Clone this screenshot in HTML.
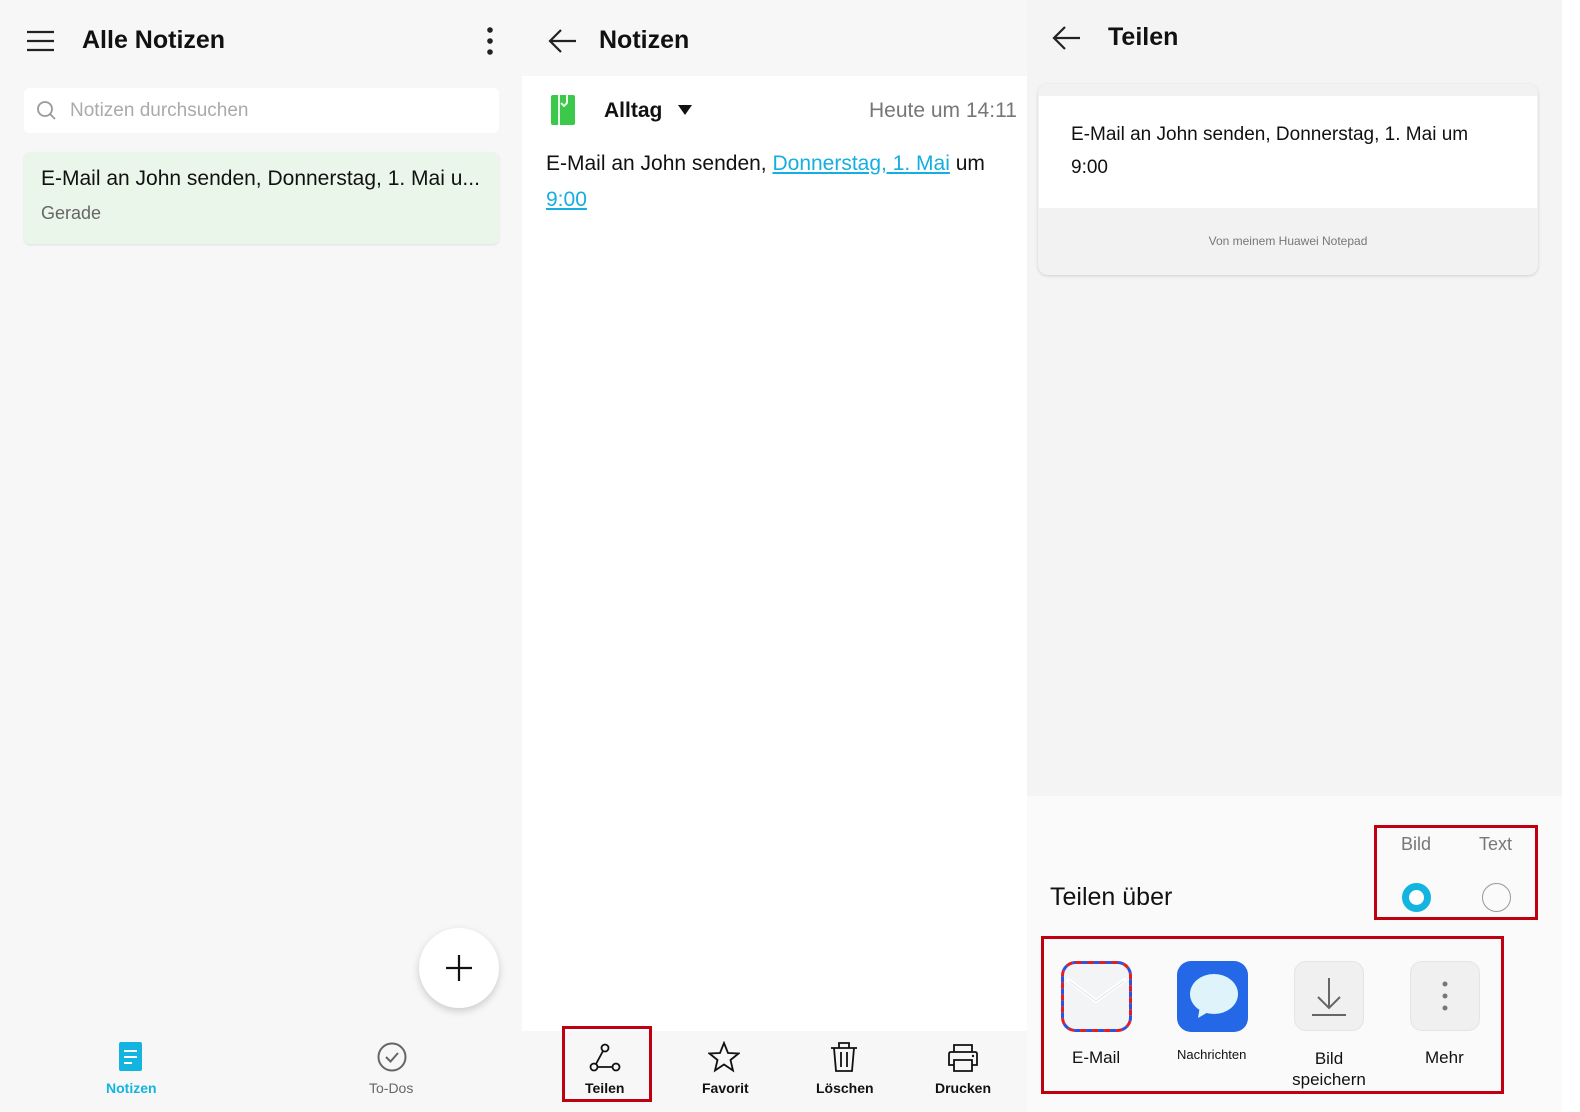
<!DOCTYPE html>
<html><head><meta charset="utf-8"><style>
*{margin:0;padding:0;box-sizing:border-box}
body{width:1580px;height:1112px;position:relative;background:#fff;font-family:"Liberation Sans",Roboto,sans-serif;overflow:hidden;color:#111}
.a{position:absolute}
.red{position:absolute;border:3px solid #c00010}
</style></head><body>
<!-- LEFT -->
<div class="a" style="left:0;top:0;width:522px;height:1112px;background:#f7f7f7"></div>
<svg class="a" style="left:26px;top:30px" width="30" height="22"><path d="M1 2H28M1 11H28M1 20H28" stroke="#222" stroke-width="2.2"/></svg>
<div class="a" style="left:82px;top:26px;font-size:25px;font-weight:bold;color:#111">Alle Notizen</div>
<svg class="a" style="left:484px;top:26px" width="12" height="32"><circle cx="6" cy="4" r="2.8" fill="#222"/><circle cx="6" cy="15" r="2.8" fill="#222"/><circle cx="6" cy="26" r="2.8" fill="#222"/></svg>
<div class="a" style="left:24px;top:88px;width:475px;height:45px;background:#fff;border-radius:6px"></div>
<svg class="a" style="left:36px;top:100px" width="22" height="22"><circle cx="9" cy="9" r="7" stroke="#999" stroke-width="1.8" fill="none"/><path d="M14 14L19 19" stroke="#999" stroke-width="1.8"/></svg>
<div class="a" style="left:70px;top:100px;font-size:19px;color:#aaa">Notizen durchsuchen</div>
<div class="a" style="left:24px;top:152px;width:475px;height:92px;background:#eaf6ea;border-radius:6px;box-shadow:0 1px 2px rgba(0,0,0,.1)"></div>
<div class="a" style="left:41px;top:167px;font-size:21px;color:#111">E-Mail an John senden, Donnerstag, 1. Mai u...</div>
<div class="a" style="left:41px;top:203px;font-size:18px;color:#666">Gerade</div>
<div class="a" style="left:419px;top:928px;width:80px;height:80px;border-radius:50%;background:#fff;box-shadow:0 3px 8px rgba(0,0,0,.18)"></div>
<svg class="a" style="left:444px;top:953px" width="30" height="30"><path d="M15 2V28M2 15H28" stroke="#111" stroke-width="2.2"/></svg>
<svg class="a" style="left:119px;top:1042px" width="24" height="30"><rect x="0" y="0" width="23" height="29" rx="2" fill="#14b4e0"/><path d="M5 9H18M5 15H18M5 21H13" stroke="#fff" stroke-width="2"/></svg>
<div class="a" style="left:106px;top:1080px;font-size:14px;font-weight:bold;color:#14b4e0">Notizen</div>
<svg class="a" style="left:377px;top:1042px" width="30" height="30"><circle cx="15" cy="15" r="13.5" stroke="#666" stroke-width="2" fill="none"/><path d="M9 15L13.5 19.5L21 11" stroke="#666" stroke-width="2" fill="none"/></svg>
<div class="a" style="left:369px;top:1080px;font-size:14px;color:#666">To-Dos</div>

<!-- MIDDLE -->
<div class="a" style="left:522px;top:0;width:505px;height:76px;background:#f7f7f7"></div>
<div class="a" style="left:522px;top:76px;width:505px;height:955px;background:#fff"></div>
<div class="a" style="left:522px;top:1031px;width:505px;height:81px;background:#f7f7f7"></div>
<svg class="a" style="left:548px;top:28px" width="30" height="26"><path d="M28 13H3M13 2L2 13L13 24" stroke="#222" stroke-width="2.2" fill="none"/></svg>
<div class="a" style="left:599px;top:26px;font-size:25px;font-weight:bold">Notizen</div>
<svg class="a" style="left:551px;top:95px" width="26" height="31"><rect x="0" y="0" width="24" height="30" rx="2" fill="#3cc84a"/><path d="M8 0V30M16 0V8L13 11L10 8" stroke="#eaf8ea" stroke-width="2" fill="none"/></svg>
<div class="a" style="left:604px;top:99px;font-size:21px;font-weight:bold">Alltag</div>
<svg class="a" style="left:677px;top:104px" width="16" height="12"><path d="M1 1H15L8 11Z" fill="#111"/></svg>
<div class="a" style="left:869px;top:99px;font-size:21px;color:#777">Heute um 14:11</div>
<div class="a" style="left:546px;top:146px;font-size:21px;line-height:36px;width:470px">E-Mail an John senden, <span style="color:#14aee0;text-decoration:underline">Donnerstag, 1. Mai</span> um<br><span style="color:#14aee0;text-decoration:underline">9:00</span></div>
<div class="red" style="left:562px;top:1026px;width:90px;height:76px"></div>
<svg class="a" style="left:589px;top:1043px" width="34" height="30"><circle cx="16" cy="5" r="3.5" stroke="#111" stroke-width="1.8" fill="none"/><circle cx="5" cy="24" r="3.5" stroke="#111" stroke-width="1.8" fill="none"/><circle cx="27" cy="24" r="3.5" stroke="#111" stroke-width="1.8" fill="none"/><path d="M14 8L7 21M8.5 24H23.5" stroke="#111" stroke-width="1.8"/></svg>
<div class="a" style="left:585px;top:1080px;font-size:14px;font-weight:bold">Teilen</div>
<svg class="a" style="left:708px;top:1041px" width="32" height="32"><path d="M16 2L20 12L30.5 12.5L22.5 19L25 29.5L16 23.5L7 29.5L9.5 19L1.5 12.5L12 12Z" stroke="#111" stroke-width="1.8" fill="none"/></svg>
<div class="a" style="left:702px;top:1080px;font-size:14px;font-weight:bold">Favorit</div>
<svg class="a" style="left:829px;top:1041px" width="30" height="32"><path d="M2 7H28M10 7V2H20V7M5 7L7 30H23L25 7M12 11V26M18 11V26" stroke="#111" stroke-width="1.8" fill="none"/></svg>
<div class="a" style="left:816px;top:1080px;font-size:14px;font-weight:bold">Löschen</div>
<svg class="a" style="left:946px;top:1043px" width="34" height="30"><path d="M8 9V2H26V9M8 22H3V11Q3 9 5 9H29Q31 9 31 11V22H26M8 17H26V28H8Z" stroke="#111" stroke-width="1.8" fill="none"/><circle cx="27" cy="13" r="1.2" fill="#111"/></svg>
<div class="a" style="left:935px;top:1080px;font-size:14px;font-weight:bold">Drucken</div>

<!-- RIGHT -->
<div class="a" style="left:1027px;top:0;width:535px;height:796px;background:#f4f4f4"></div>
<div class="a" style="left:1027px;top:796px;width:535px;height:316px;background:#fafafa"></div>
<svg class="a" style="left:1052px;top:25px" width="30" height="26"><path d="M28 13H3M13 2L2 13L13 24" stroke="#222" stroke-width="2.2" fill="none"/></svg>
<div class="a" style="left:1108px;top:23px;font-size:25px;font-weight:bold">Teilen</div>
<div class="a" style="left:1038px;top:84px;width:500px;height:191px;background:#f2f2f2;border-radius:10px;box-shadow:0 1px 3px rgba(0,0,0,.15)"></div>
<div class="a" style="left:1039px;top:96px;width:498px;height:112px;background:#fff"></div>
<div class="a" style="left:1071px;top:118px;font-size:19px;line-height:33px">E-Mail an John senden, Donnerstag, 1. Mai um<br>9:00</div>
<div class="a" style="left:1038px;top:234px;width:500px;text-align:center;font-size:12px;color:#777">Von meinem Huawei Notepad</div>
<div class="a" style="left:1050px;top:883px;font-size:25px;color:#111">Teilen über</div>
<div class="red" style="left:1374px;top:825px;width:164px;height:95px"></div>
<div class="a" style="left:1401px;top:834px;font-size:18px;color:#777">Bild</div>
<div class="a" style="left:1479px;top:834px;font-size:18px;color:#777">Text</div>
<div class="a" style="left:1402px;top:883px;width:29px;height:29px;border-radius:50%;border:7px solid #14b4e0;background:#fff"></div>
<div class="a" style="left:1482px;top:883px;width:29px;height:29px;border-radius:50%;border:1.5px solid #999"></div>
<div class="red" style="left:1041px;top:936px;width:463px;height:158px"></div>
<svg class="a" style="left:1061px;top:961px" width="71" height="71"><rect x="1.5" y="1.5" width="68" height="68" rx="13" fill="#f3f4f6"/><rect x="1.5" y="1.5" width="68" height="68" rx="13" fill="none" stroke="#e02020" stroke-width="3" stroke-dasharray="6 6"/><rect x="1.5" y="1.5" width="68" height="68" rx="13" fill="none" stroke="#3050e0" stroke-width="3" stroke-dasharray="6 6" stroke-dashoffset="6"/><path d="M6 18L35 40L65 18" stroke="#fff" stroke-width="4" fill="none"/><path d="M8 20L35 40L63 20" stroke="#e2e4e8" stroke-width="1" fill="none"/></svg>
<div class="a" style="left:1072px;top:1048px;font-size:17px">E-Mail</div>
<div class="a" style="left:1177px;top:961px;width:71px;height:71px;border-radius:14px;background:#2468e8"></div>
<svg class="a" style="left:1184px;top:968px" width="58" height="56"><ellipse cx="30" cy="26" rx="24" ry="20" fill="#dff3fb"/><path d="M16 38L14 50L26 43Z" fill="#dff3fb"/></svg>
<div class="a" style="left:1177px;top:1047px;font-size:13px">Nachrichten</div>
<div class="a" style="left:1294px;top:961px;width:70px;height:70px;border-radius:12px;background:#f0f0f0;border:1px solid #e4e4e4"></div>
<svg class="a" style="left:1310px;top:975px" width="38" height="42"><path d="M19 3V33M8 22L19 33L30 22M2 40H36" stroke="#666" stroke-width="2" fill="none"/></svg>
<div class="a" style="left:1290px;top:1048px;width:78px;text-align:center;font-size:17px;line-height:21px">Bild<br>speichern</div>
<div class="a" style="left:1410px;top:961px;width:70px;height:70px;border-radius:12px;background:#f0f0f0;border:1px solid #e4e4e4"></div>
<svg class="a" style="left:1440px;top:980px" width="10" height="32"><circle cx="5" cy="4" r="2.5" fill="#777"/><circle cx="5" cy="16" r="2.5" fill="#777"/><circle cx="5" cy="28" r="2.5" fill="#777"/></svg>
<div class="a" style="left:1425px;top:1048px;font-size:17px">Mehr</div>
</body></html>
